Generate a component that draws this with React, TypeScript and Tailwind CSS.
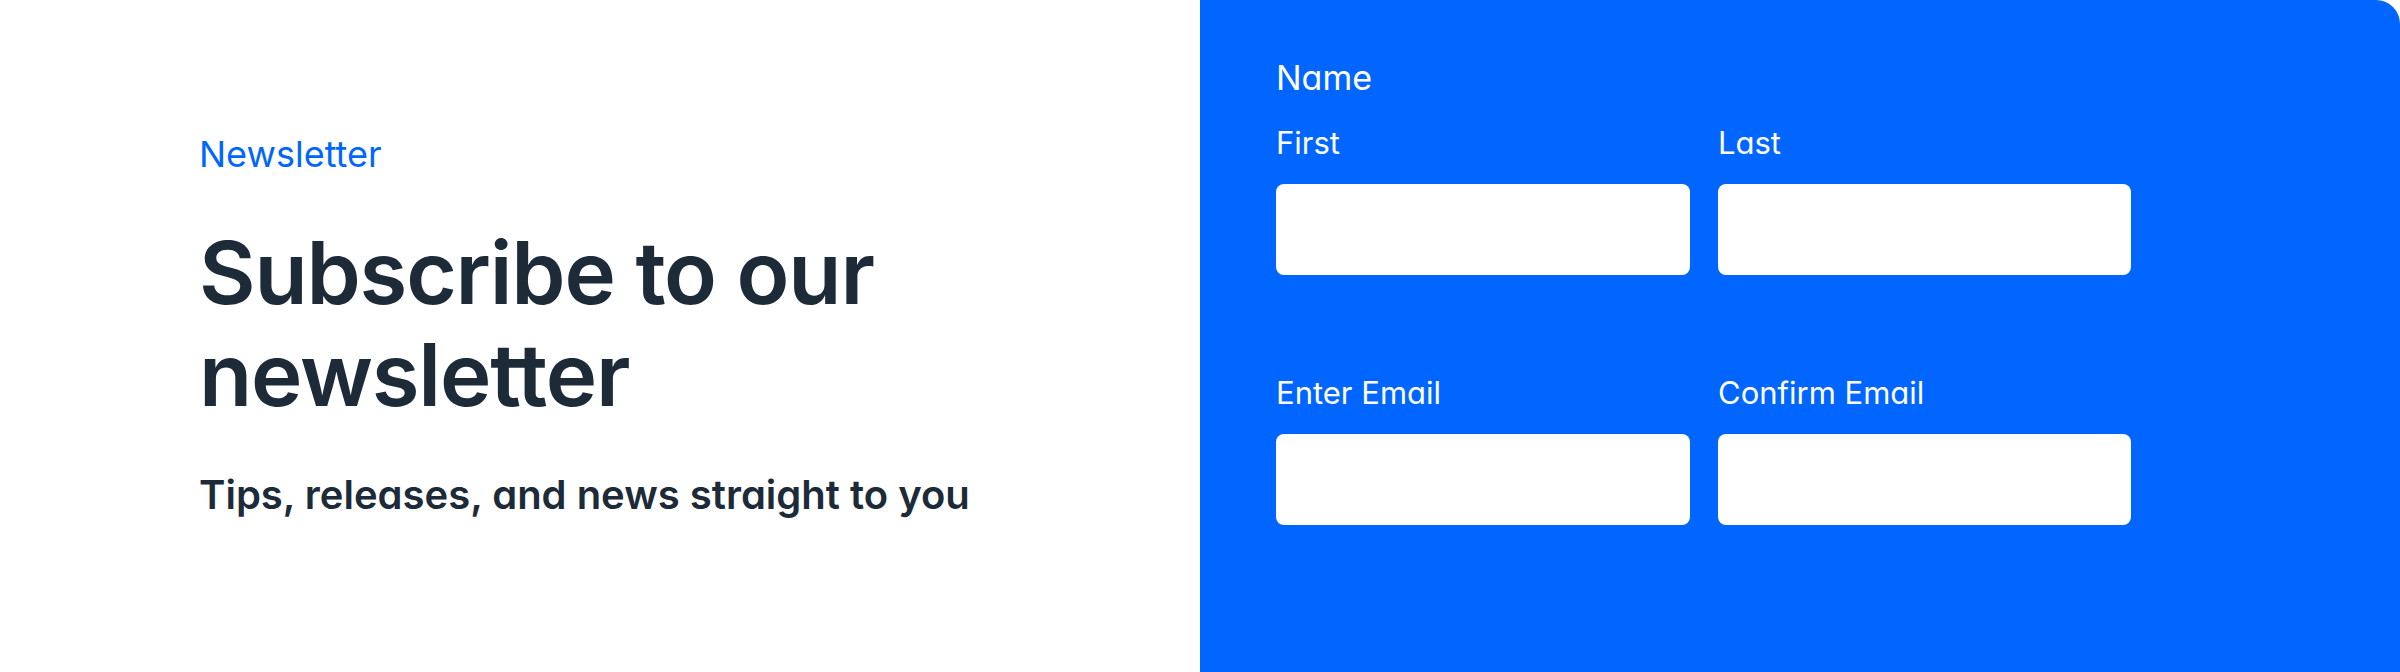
import React from 'react';

function Field({ label }: { label: string }) {
    return (
        <div className="flex flex-col">
            <label className="text-[31px] leading-[36px] font-normal text-white">{label}</label>
            <input type="text" className="mt-[23px] h-[91px] w-full rounded-[8px] bg-white outline-none" />
        </div>
    );
}

export default function App() {
    return (
        <div className="flex h-[672px] w-full bg-white font-['Inter',sans-serif] [font-feature-settings:'cv11']">
            <div className="flex w-[1200px] flex-col pl-[199px] pt-[133px]">
                <p className="text-[36px] leading-[43px] font-normal text-[#0066ff]">Newsletter</p>
                <h1 className="mt-[46px] text-[87px] leading-[102px] font-semibold tracking-[-1.2px] text-[#1d2a38]">
                    Subscribe to our
                    <br />
                    newsletter
                </h1>
                <p className="mt-[45px] text-[40px] leading-[48px] font-semibold text-[#1d2a38]">
                    Tips, releases, and news straight to you
                </p>
            </div>
            <div className="flex flex-1 flex-col rounded-tr-[24px] bg-[#0066ff] pl-[76px] pt-[57px]">
                <p className="text-[34px] leading-[41px] font-normal text-white">Name</p>
                <div className="mt-[27px] grid grid-cols-[414px_413px] gap-x-[28px] gap-y-[100px]">
                    <Field label="First" />
                    <Field label="Last" />
                    <Field label="Enter Email" />
                    <Field label="Confirm Email" />
                </div>
            </div>
        </div>
    );
}
